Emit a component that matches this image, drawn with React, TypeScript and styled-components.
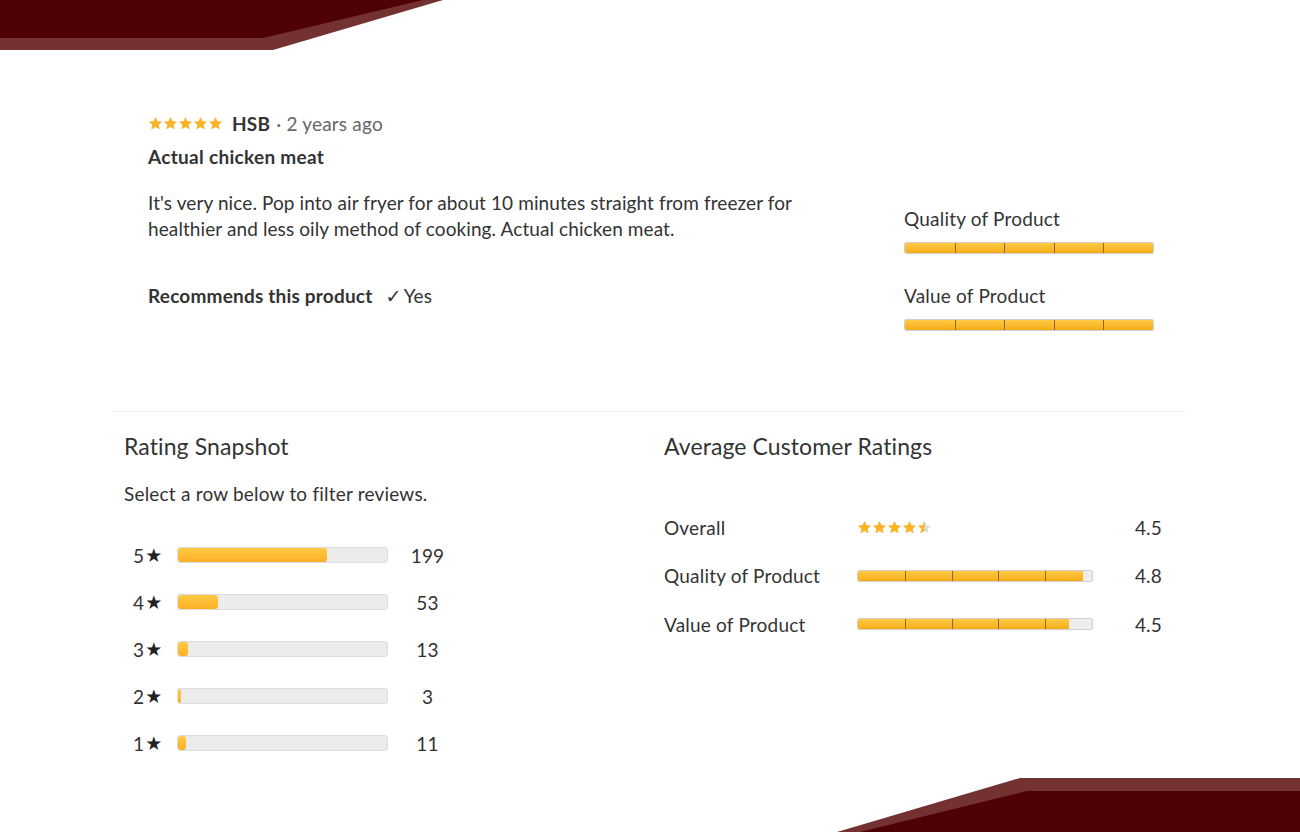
import React, { useId } from "react";
import styled, { createGlobalStyle } from "styled-components";

const Global = createGlobalStyle`
  html, body { margin: 0; padding: 0; background: #fff; }
  body { font-family: Lato, "Open Sans", "DejaVu Sans", sans-serif; color: #333; }
  * { box-sizing: border-box; }
`;

const Page = styled.div`
  position: relative;
  width: 1300px;
  height: 832px;
  overflow: hidden;
  background: #fff;
  letter-spacing: 0.2px;
`;

const Corner = styled.svg<{ $pos: "top" | "bottom" }>`
  position: absolute;
  display: block;
  ${(p) => (p.$pos === "top" ? "top: 0; left: 0;" : "bottom: 0; right: 0;")}
`;

const Content = styled.div`
  padding-top: 111px;
`;

const ReviewSection = styled.section`
  display: flex;
  padding-left: 148px;
`;

const ReviewMain = styled.div`
  width: 700px;
`;

const ReviewHeader = styled.div`
  display: flex;
  align-items: center;
  height: 24px;
`;

const Stars = styled.span<{ $gap?: number }>`
  display: inline-flex;
  align-items: center;
  gap: ${(p) => p.$gap ?? 0}px;
`;

const Author = styled.span`
  margin-left: 9px;
  font-size: 19px;
  font-weight: 700;
  color: #333;
`;

const Ago = styled.span`
  margin-left: 6px;
  font-size: 19px;
  color: #666;
`;

const Title = styled.h3`
  margin: 10px 0 0;
  font-size: 19px;
  line-height: 24px;
  font-weight: 700;
  letter-spacing: 0.3px;
  color: #333;
`;

const Body = styled.p`
  margin: 21px 0 0;
  font-size: 19px;
  line-height: 26px;
  letter-spacing: 0.1px;
  color: #333;
  max-width: 660px;
`;

const Recommend = styled.div`
  margin-top: 42px;
  display: flex;
  align-items: center;
  font-size: 19px;
  line-height: 24px;
`;

const RecommendLabel = styled.span`
  font-weight: 700;
`;

const Yes = styled.span`
  margin-left: 13px;
  display: inline-flex;
  align-items: center;
`;

const Check = styled.span`
  font-family: "DejaVu Sans", sans-serif;
  font-size: 19px;
  font-weight: 700;
  margin-right: 2px;
`;

const ReviewAside = styled.div`
  margin-left: 56px;
  margin-top: 96px;
  width: 250px;
  display: flex;
  flex-direction: column;
`;

const AsideLabel = styled.div<{ $first?: boolean }>`
  font-size: 19px;
  line-height: 24px;
  margin-top: ${(p) => (p.$first ? 0 : 30)}px;
`;

const SegTrack = styled.div<{ $w: number; $mt?: number }>`
  position: relative;
  width: ${(p) => p.$w}px;
  height: 12px;
  margin-top: ${(p) => p.$mt ?? 0}px;
  background: #ececec;
  border: 1px solid #d0d0d0;
  border-radius: 2px;
  overflow: hidden;
`;

const SegFill = styled.div`
  height: 100%;
  background: linear-gradient(#ffc944, #f5ad18);
  border-radius: 2px 0 0 2px;
`;

const SegDivider = styled.span`
  position: absolute;
  top: 0;
  bottom: 0;
  width: 1px;
  background: #7a5a10;
  opacity: 0.85;
`;

const Divider = styled.div`
  height: 1px;
  background: #f0f0f0;
  margin: 80px 114px 0 113px;
`;

const Lower = styled.section`
  display: grid;
  grid-template-columns: 540px 1fr;
  padding-left: 124px;
  padding-top: 20px;
`;

const Heading = styled.h2`
  margin: 0;
  font-size: 23px;
  line-height: 28px;
  font-weight: 400;
  letter-spacing: 0.1px;
  color: #333;
`;

const Hint = styled.div`
  margin-top: 22px;
  font-size: 19px;
  line-height: 24px;
`;

const SnapList = styled.div`
  margin-top: 37px;
  display: flex;
  flex-direction: column;
  gap: 23px;
`;

const SnapRow = styled.div`
  display: flex;
  align-items: center;
  height: 24px;
  cursor: pointer;
`;

const SnapLabel = styled.span`
  width: 53px;
  padding-left: 9px;
  font-size: 19px;
  display: inline-flex;
  align-items: center;
`;

const StarGlyph = styled.span`
  font-family: "DejaVu Sans", sans-serif;
  font-size: 19px;
  margin-left: 1px;
  color: #222;
`;

const SnapTrack = styled.div`
  width: 211px;
  height: 16px;
  background: #ececec;
  border: 1px solid #dcdcdc;
  border-radius: 3px;
  overflow: hidden;
`;

const SnapFill = styled.div`
  height: 100%;
  background: linear-gradient(#ffc945, #fbb125);
  border-radius: 3px;
`;

const SnapCount = styled.span`
  width: 45px;
  margin-left: 17px;
  text-align: center;
  font-size: 19px;
`;

const AvgList = styled.div`
  margin-top: 55px;
  display: flex;
  flex-direction: column;
  gap: 24.5px;
`;

const AvgRow = styled.div`
  display: grid;
  grid-template-columns: 193px 236px 69px;
  align-items: center;
  height: 24px;
  font-size: 19px;
`;

const AvgValue = styled.span`
  text-align: right;
`;

const STAR_PATH =
  "M12 1.5l3.1 6.7 7.3.8-5.45 4.95 1.55 7.2L12 17.5l-6.5 3.65 1.55-7.2L1.6 9l7.3-.8z";

const Star: React.FC<{ size: number; fraction: number }> = ({ size, fraction }) => {
  const id = useId();
  return (
    <svg width={size} height={size} viewBox="0 0 24 24">
      <defs>
        <clipPath id={id}>
          <rect x="0" y="0" width={24 * fraction} height="24" />
        </clipPath>
      </defs>
      <path d={STAR_PATH} fill="#dcdcdc" />
      <path d={STAR_PATH} fill="#fbb424" clipPath={`url(#${id})`} />
    </svg>
  );
};

const StarRating: React.FC<{ value: number; size: number; gap?: number }> = ({ value, size, gap }) => (
  <Stars $gap={gap}>
    {[0, 1, 2, 3, 4].map((i) => (
      <Star key={i} size={size} fraction={Math.max(0, Math.min(1, value - i))} />
    ))}
  </Stars>
);

const SegmentBar: React.FC<{ value: number; width: number; mt?: number }> = ({ value, width, mt }) => (
  <SegTrack $w={width} $mt={mt}>
    <SegFill style={{ width: `${(value / 5) * 100}%` }} />
    {[1, 2, 3, 4].map((i) => (
      <SegDivider key={i} style={{ left: `${i * 20}%` }} />
    ))}
  </SegTrack>
);

const snapshot = [
  { stars: 5, count: 199 },
  { stars: 4, count: 53 },
  { stars: 3, count: 13 },
  { stars: 2, count: 3 },
  { stars: 1, count: 11 },
];
const total = snapshot.reduce((s, r) => s + r.count, 0);

const averages = [
  { label: "Quality of Product", value: 4.8, fill: 4.8 },
  { label: "Value of Product", value: 4.5, fill: 4.5 },
];

export default function App() {
  return (
    <Page>
      <Global />
      <Corner $pos="top" width="445" height="50" viewBox="0 0 445 50">
        <polygon points="0,0 443,0 273,50 0,50" fill="#733131" />
        <polygon points="0,0 423,0 263,38 0,38" fill="#4e0005" />
      </Corner>
      <Corner $pos="bottom" width="470" height="62" viewBox="0 0 470 62">
        <polygon points="190,8 470,8 470,62 7,62" fill="#733131" />
        <polygon points="197,21 470,21 470,62 30,62" fill="#4e0005" />
      </Corner>
      <Content>
        <ReviewSection>
          <ReviewMain>
            <ReviewHeader>
              <StarRating value={5} size={15} />
              <Author>HSB</Author>
              <Ago>· 2 years ago</Ago>
            </ReviewHeader>
            <Title>Actual chicken meat</Title>
            <Body>
              It's very nice. Pop into air fryer for about 10 minutes straight from freezer for healthier and less
              oily method of cooking. Actual chicken meat.
            </Body>
            <Recommend>
              <RecommendLabel>Recommends this product</RecommendLabel>
              <Yes>
                <Check>✓</Check>Yes
              </Yes>
            </Recommend>
          </ReviewMain>
          <ReviewAside>
            <AsideLabel $first>Quality of Product</AsideLabel>
            <SegmentBar value={5} width={250} mt={11} />
            <AsideLabel>Value of Product</AsideLabel>
            <SegmentBar value={5} width={250} mt={11} />
          </ReviewAside>
        </ReviewSection>
        <Divider />
        <Lower>
          <div>
            <Heading>Rating Snapshot</Heading>
            <Hint>Select a row below to filter reviews.</Hint>
            <SnapList>
              {snapshot.map((r) => (
                <SnapRow key={r.stars}>
                  <SnapLabel>
                    {r.stars}
                    <StarGlyph>★</StarGlyph>
                  </SnapLabel>
                  <SnapTrack>
                    <SnapFill style={{ width: `${Math.max(1.5, (r.count / total) * 100)}%` }} />
                  </SnapTrack>
                  <SnapCount>{r.count}</SnapCount>
                </SnapRow>
              ))}
            </SnapList>
          </div>
          <div>
            <Heading>Average Customer Ratings</Heading>
            <AvgList>
              <AvgRow>
                <span>Overall</span>
                <StarRating value={4.5} size={15} />
                <AvgValue>4.5</AvgValue>
              </AvgRow>
              {averages.map((a) => (
                <AvgRow key={a.label}>
                  <span>{a.label}</span>
                  <SegmentBar value={a.fill} width={236} />
                  <AvgValue>{a.value}</AvgValue>
                </AvgRow>
              ))}
            </AvgList>
          </div>
        </Lower>
      </Content>
    </Page>
  );
}
